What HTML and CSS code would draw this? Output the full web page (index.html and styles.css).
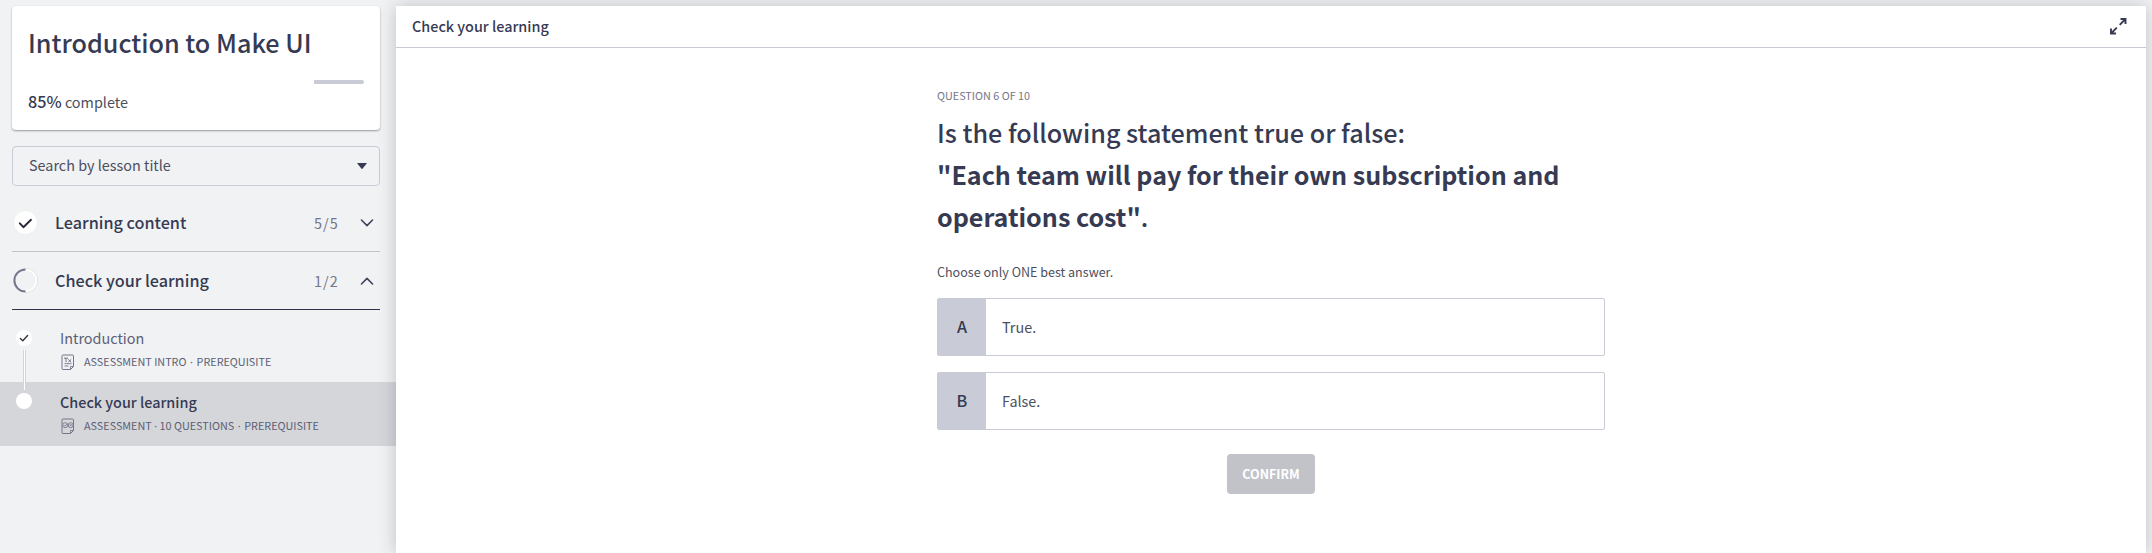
FILE: index.html
```
<!DOCTYPE html>
<html lang="en">
<head>
<meta charset="utf-8">
<title>Introduction to Make UI</title>
<link rel="stylesheet" href="styles.css">
</head>
<body>
<div class="app">
  <aside class="sidebar">
    <section class="course-card">
      <h1 class="course-title">Introduction to Make UI</h1>
      <div class="progress"><div class="progress-rest"></div></div>
      <p class="progress-label"><strong>85%</strong> complete</p>
    </section>
    <div class="search"><span class="search-text">Search by lesson title</span>
      <svg class="caret" width="10" height="6" viewBox="0 0 10 6"><path d="M.8 0h8.4q.9 0 .3.8L5.7 5.5q-.7.8-1.4 0L.5.8Q-.1 0 .8 0z" fill="#363a52"/></svg>
    </div>
    <div class="section section-closed">
      <svg width="25" height="25" viewBox="0 0 25 25"><circle cx="12.5" cy="12.5" r="12" fill="#fff" stroke="#e6e7ea" stroke-width=".6"/><path d="M6.8 13.3l3.6 3.9 7.6-7.4" fill="none" stroke="#252a34" stroke-width="1.9" stroke-linecap="round" stroke-linejoin="round"/></svg>
      <span class="section-name">Learning content</span>
      <span class="count">5/5</span>
      <svg class="chev" width="14" height="8" viewBox="0 0 14 8"><path d="M1.5 1L7 6.6 12.5 1" fill="none" stroke="#41455a" stroke-width="1.6" stroke-linecap="round" stroke-linejoin="round"/></svg>
    </div>
    <div class="section section-open">
      <svg width="25" height="25" viewBox="0 0 25 25"><path d="M12.5.6a11.9 11.9 0 0 1 0 23.8" fill="none" stroke="#d3d4d9" stroke-width=".9"/><path d="M12.5 1.6a10.9 10.9 0 0 1 0 21.8" fill="none" stroke="#fff" stroke-width="1.7"/><path d="M12.5 23.6a11.1 11.1 0 0 1 0-22.2" fill="none" stroke="#74768a" stroke-width="2"/></svg>
      <span class="section-name">Check your learning</span>
      <span class="count">1/2</span>
      <svg class="chev" width="14" height="8" viewBox="0 0 14 8"><path d="M1.5 7L7 1.4 12.5 7" fill="none" stroke="#41455a" stroke-width="1.6" stroke-linecap="round" stroke-linejoin="round"/></svg>
    </div>
    <div class="lesson lesson-first">
      <div class="track">
        <svg width="16" height="16" viewBox="0 0 16 16"><circle cx="8" cy="8" r="8" fill="#fff"/><path d="M4.4 8.5l2.4 2.2 4.8-5.2" fill="none" stroke="#30343f" stroke-width="1.4" stroke-linecap="round" stroke-linejoin="round"/></svg>
        <div class="connector"></div>
      </div>
      <div class="lesson-body">
        <div class="lesson-name">Introduction</div>
        <div class="meta">
          <svg width="14" height="17" viewBox="0 0 14 17" fill="none" stroke="#74768a"><path d="M9.5 15.5H2q-1 0-1-1V2q0-1 1-1h9.5q1 0 1 1v10.5z"/><path d="M12.5 12.5h-3v3M3.5 9.7h7M3.5 12h4" stroke-width=".9"/><path d="M3 4.2h4M5 4.2v4M7.2 5.4l3 2.8M10.2 5.4l-3 2.8"/></svg>
          <span>ASSESSMENT INTRO <i class="dot wide">·</i> PREREQUISITE</span>
        </div>
      </div>
    </div>
    <div class="lesson lesson-active">
      <div class="track">
        <div class="connector connector-end"></div>
        <svg width="16" height="16" viewBox="0 0 16 16"><circle cx="8" cy="8" r="8" fill="#fff"/></svg>
      </div>
      <div class="lesson-body">
        <div class="lesson-name current">Check your learning</div>
        <div class="meta">
          <svg width="14" height="17" viewBox="0 0 14 17" fill="none" stroke="#74768a"><path d="M9.5 15.5H2q-1 0-1-1V2q0-1 1-1h9.5q1 0 1 1v10.5z"/><path d="M12.5 12.5h-3v3" stroke-width=".9"/><circle cx="4.2" cy="7.2" r="2.5" stroke-width=".9"/><circle cx="9.6" cy="7.2" r="2.5" stroke-width=".9"/><path d="M3 7.1l1 1L6.3 5.8M8.6 6.2l2 2M10.6 6.2l-2 2" stroke-width=".8"/></svg>
          <span>ASSESSMENT <i class="dot">·</i> 10 QUESTIONS <i class="dot wide">·</i> PREREQUISITE</span>
        </div>
      </div>
    </div>
  </aside>
  <main class="panel">
    <header class="panel-head"><span class="panel-title">Check your learning</span>
      <svg width="17" height="17" viewBox="0 0 17 17" fill="none" stroke="#363a52" stroke-width="1.9"><path d="M9.7 6.8L15 1.5M10.5 1h5v5M6.8 9.7L1.5 15M1 10.5v5h5"/></svg>
    </header>
    <div class="question">
      <p class="eyebrow">QUESTION 6 OF 10</p>
      <h2 class="prompt">Is the following statement true or false:<br><b>"Each team will pay for their own subscription and<br>operations cost"</b>.</h2>
      <p class="hint">Choose only ONE best answer.</p>
      <div class="answer"><span class="letter">A</span><span class="answer-text">True.</span></div>
      <div class="answer"><span class="letter">B</span><span class="answer-text">False.</span></div>
      <button class="confirm">CONFIRM</button>
    </div>
  </main>
</div>
</body>
</html>
```

FILE: styles.css
```
* { box-sizing: border-box; margin: 0; padding: 0; }
body {
  background: #f1f2f4;
  color: #363a52;
  font-family: "Noto Sans CJK SC", "Noto Sans", sans-serif;
  font-size: 14.4px;
  white-space: nowrap;
  overflow: hidden;
}
svg { display: block; flex: none; }
.app { display: flex; height: 553px; }

.sidebar { width: 396px; flex: none; padding-top: 6px; }
.course-card {
  width: 368px; height: 124px; margin-left: 12px; padding: 16px 16px 0;
  background: #fff; border-radius: 4px;
  box-shadow: 0 1px 2px rgba(40, 44, 60, .45);
}
.course-title { height: 40px; line-height: 40px; font-size: 25.2px; font-weight: 500; }
.progress { display: flex; justify-content: flex-end; height: 4px; margin-top: 18px; border-radius: 2px; }
.progress-rest { width: 50px; background: #c9cbd6; border-radius: 0 2px 2px 0; }
.progress-label { height: 24px; line-height: 24px; margin-top: 5px; color: #4b4f60; }
.progress-label strong { font-size: 16.2px; font-weight: 500; color: #363a52; }

.search {
  display: flex; align-items: center; justify-content: space-between;
  width: 368px; height: 40px; margin: 16px 0 0 12px; padding: 0 12px 0 16px;
  border: 1px solid #c9cbd6; border-radius: 4px; color: #4b4f60;
}
.search-text { line-height: 20px; padding-bottom: 2px; }

.section {
  display: flex; align-items: center;
  width: 368px; height: 58px; margin-left: 12px; padding: 0 6px 0 1px;
  border-bottom: 1px solid #c1c2ca;
}
.section-closed { margin-top: 8px; }
.section-open { border-bottom-color: #2f3349; }
.section-name { width: 259px; margin-left: 17px; padding-bottom: 1px; font-size: 16.2px; line-height: 24px; font-weight: 500; }
.count { width: 34px; color: #74768a; letter-spacing: 1px; line-height: 24px; }
.chev { margin-left: 12px; }

.lesson { display: flex; height: 64px; padding-left: 16px; }
.lesson-first { height: 72px; padding-top: 20px; }
.track { width: 16px; }
.connector { width: 3px; height: 32px; margin: 4px 0 0 7px; background: #fff; border: solid #d3d4d8; border-width: 0 1px; }
.connector-end { height: 8px; margin: 0 0 3px 7px; }
.lesson-body { margin-left: 28px; }
.lesson-name { height: 18px; line-height: 16px; color: #5c5f74; }
.current { font-weight: 500; color: #363a52; }
.lesson-active { background: #d5d6da; }
.lesson-active .lesson-body { padding-top: 12px; }
.meta { display: flex; align-items: center; gap: 9px; height: 17px; margin-top: 6px; margin-left: 1px; line-height: 17px; font-size: 10.8px; color: #5c5f74; }
.meta span { padding-bottom: 2px; }
.dot { font-family: "Noto Sans", sans-serif; font-style: normal; line-height: 1; }
.wide { margin: 0 1.2px; }

.panel {
  display: flex; flex-direction: column;
  width: 1750px; height: 547px; margin-top: 6px; background: #fff;
  box-shadow: 0 0 16px rgba(40, 44, 60, .25);
}
.panel-head {
  display: flex; align-items: center; justify-content: space-between;
  height: 42px; padding: 0 19px 0 16px; border-bottom: 1px solid #c9c8d6; font-weight: 500;
}
.panel-title { padding-bottom: 2px; }
.question { width: 668px; margin: 38px 0 0 541px; }
.eyebrow { height: 18px; line-height: 18px; font-size: 10.8px; color: #74768a; }
.prompt { margin-top: 7px; line-height: 42px; font-size: 25.15px; font-weight: 500; }
.prompt b { font-weight: 700; font-size: 25.08px; }
.hint { height: 20px; margin-top: 25px; line-height: 20px; font-size: 12.55px; color: #4b4f60; }
.answer {
  display: flex; align-items: center; height: 58px; margin-top: 16px;
  border: 1px solid #c9cbd6; border-radius: 2px; color: #4b4f60;
}
.letter { width: 48px; height: 56px; line-height: 54px; background: #c9cbd6; text-align: center; font-size: 16.2px; font-weight: 500; color: #363a52; }
.answer-text { margin-left: 16px; padding-bottom: 1px; }
.confirm {
  display: block; width: 88px; height: 40px; margin: 24px auto 0;
  border: 0; border-radius: 4px; background: #c2c3c9; color: #fff;
  font: 700 12.5px/40px "Noto Sans CJK SC", sans-serif;
}
```
